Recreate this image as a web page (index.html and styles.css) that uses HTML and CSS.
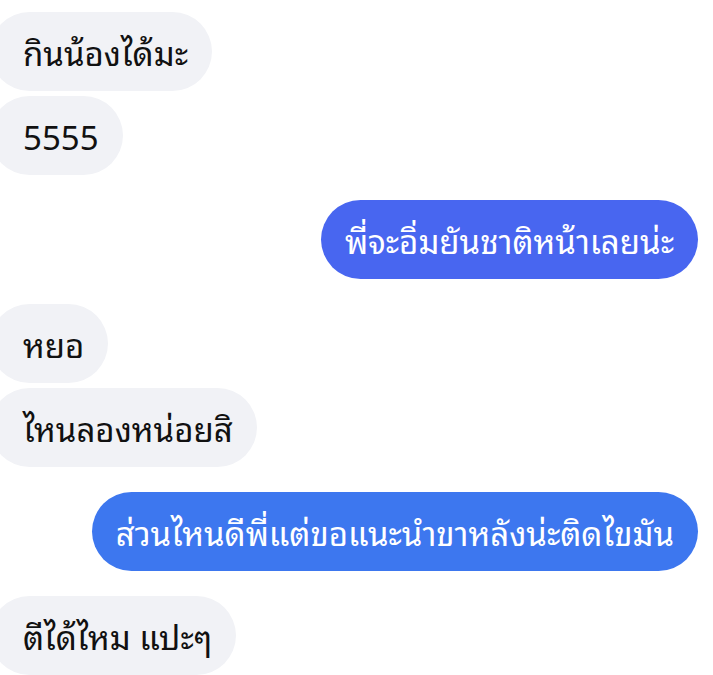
FILE: index.html
```html
<!DOCTYPE html>
<html lang="th">
<head>
<meta charset="utf-8">
<link rel="stylesheet" href="styles.css">
</head>
<body>
<div class="chat">
  <div class="group in">
    <div class="bubble">กินน้องได้มะ</div>
    <div class="bubble">5555</div>
  </div>
  <div class="group out">
    <div class="bubble b1">พี่จะอิ่มยันชาติหน้าเลยน่ะ</div>
  </div>
  <div class="group in">
    <div class="bubble">หยอ</div>
    <div class="bubble">ไหนลองหน่อยสิ</div>
  </div>
  <div class="group out">
    <div class="bubble b2">ส่วนไหนดีพี่แต่ขอแนะนำขาหลังน่ะติดไขมัน</div>
  </div>
  <div class="group in">
    <div class="bubble">ตีได้ไหม แปะๆ</div>
  </div>
</div>
</body>
</html>
```
FILE: styles.css
```css
html, body {
  margin: 0;
  padding: 0;
  background: #ffffff;
}
body {
  width: 713px;
  height: 675px;
  overflow: hidden;
  font-family: "Noto Sans Thai Looped", "Noto Sans Thai", "Noto Sans", sans-serif;
}
.chat {
  display: flex;
  flex-direction: column;
  gap: 25px;
  padding: 12px 15px 0 0;
}
.group {
  display: flex;
  flex-direction: column;
  gap: 5px;
}
.group.in {
  align-items: flex-start;
  margin-left: -10px;
}
.group.out {
  align-items: flex-end;
}
.bubble {
  height: 79px;
  line-height: 79px;
  font-size: 33px;
  padding: 0 24px;
  border-radius: 40px;
  white-space: nowrap;
  box-sizing: border-box;
}
.in .bubble {
  background: #f1f2f6;
  color: #111111;
  padding-left: 33px;
}
.out .bubble {
  color: #ffffff;
}
.b1 {
  background: #4866f0;
}
.b2 {
  background: #3d77ef;
}
```
